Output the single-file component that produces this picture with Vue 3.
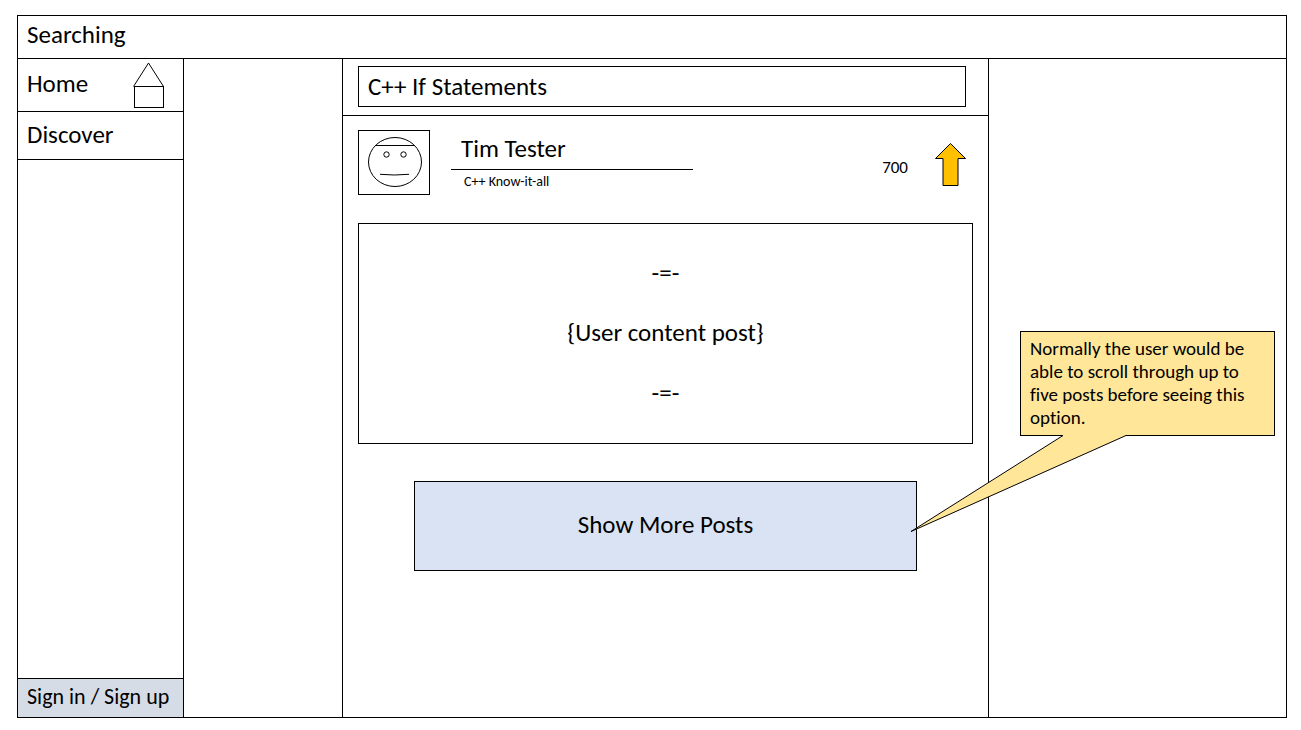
<script setup>
import { ref } from 'vue'

const query = ref('C++ If Statements')
const votes = ref(700)
const postLines = ['-=-', '{User content post}', '-=-']
</script>

<template>
  <div class="page">
    <div class="frame">
      <header class="topbar">
        <h1 class="title">Searching</h1>
      </header>

      <div class="columns">
        <nav class="sidebar">
          <a class="nav-item nav-home" href="#home">
            <span>Home</span>
            <svg class="house" viewBox="0 0 32 47" aria-hidden="true">
              <path d="M0.500 24.500L15.500 1L30.500 24.500" />
              <path d="M1.500 24.500H30.500V45.500H1.500Z" shape-rendering="crispEdges" />
            </svg>
          </a>
          <a class="nav-item nav-discover" href="#discover">Discover</a>
          <a class="sign-in" href="#sign-in">Sign in / Sign up</a>
        </nav>

        <main class="feed">
          <form class="search" @submit.prevent>
            <input v-model="query" class="search-input" type="text" aria-label="Search" />
          </form>

          <article class="post">
            <div class="author">
              <svg class="avatar" viewBox="0 0 72 65" role="img" aria-label="Avatar">
                <rect x="0.5" y="0.5" width="71" height="64" />
                <ellipse cx="37" cy="32" rx="26.5" ry="24.500" />
                <path d="M18 15.500H56" />
                <circle cx="28.500" cy="24.500" r="2.700" />
                <circle cx="45.500" cy="24.500" r="2.700" />
                <path d="M22 44.300Q36 45.700 51 44.300" />
              </svg>
              <div class="identity">
                <h2 class="name">Tim Tester</h2>
                <p class="role">C++ Know-it-all</p>
              </div>
              <span class="votes">{{ votes }}</span>
              <button class="upvote" type="button" aria-label="Upvote" @click="votes++">
                <svg viewBox="0 0 32 45" aria-hidden="true">
                  <path d="M15.500 1.500L30.500 16.500H23V43.500H8V16.500H0.500Z" />
                </svg>
              </button>
            </div>

            <div class="content">
              <p v-for="(line, i) in postLines" :key="i">{{ line }}</p>
            </div>
          </article>

          <button class="more" type="button">Show More Posts</button>
        </main>

        <aside class="notes">
          <div class="callout">
            <svg class="tail" viewBox="0 0 230 102" aria-hidden="true">
              <path class="tail-fill" d="M158 0L158 1.500L6 97.500L221 1.500L221 0Z" />
              <path class="tail-line" d="M158 1.500L6 97.500L221 1.500" />
            </svg>
            <p>Normally the user would be able to scroll through up to five posts before seeing this option.</p>
          </div>
        </aside>
      </div>
    </div>
  </div>
</template>

<style>
body {
  margin: 0;
  background: #fff;
}
</style>

<style scoped>
.page {
  box-sizing: border-box;
  display: flex;
  min-height: 100vh;
  padding: 15px 14px 12px 17px;
  color: #000;
  font-family: Calibri, Carlito, Lato, sans-serif;
  font-size: 25px;
  font-variant-ligatures: none;
  line-height: 30px;
}

.page * {
  box-sizing: border-box;
}

h1,
h2,
p {
  margin: 0;
  font-size: inherit;
  font-weight: 400;
}

a {
  color: inherit;
  text-decoration: none;
}

button,
input {
  margin: 0;
  border-radius: 0;
  color: inherit;
  font: inherit;
}

svg {
  display: block;
  fill: none;
  stroke: #000;
  stroke-width: 1;
}

.frame {
  display: flex;
  flex: 1;
  flex-direction: column;
  border: 1px solid #000;
}

.topbar {
  padding: 4px 9px 8px;
  border-bottom: 1px solid #000;
}

.columns {
  display: grid;
  flex: 1;
  grid-template-columns: 166px minmax(0, 158fr) minmax(0, 647fr) minmax(0, 297fr);
}

.sidebar {
  display: flex;
  flex-direction: column;
  grid-column: 1;
  border-right: 1px solid #000;
}

.nav-item {
  display: flex;
  align-items: center;
  border-bottom: 1px solid #000;
}

.nav-home {
  align-items: flex-start;
  justify-content: space-between;
  padding: 3px 18px 2px 9px;
}

.nav-home span {
  padding-top: 7px;
}

.nav-discover {
  padding: 8px 9px 9px;
}

.house {
  width: 32px;
  height: 47px;
}

.sign-in {
  margin-top: auto;
  padding: 3px 9px 5px;
  border-top: 1px solid #000;
  background: #d6dce5;
  font-size: 22px;
  white-space: nowrap;
}

.feed {
  grid-column: 3;
  border: solid #000;
  border-width: 0 1px;
}

.search {
  padding: 7px 22px 8px 15px;
  border-bottom: 1px solid #000;
}

.search-input {
  display: block;
  width: 100%;
  height: 41px;
  padding: 0 9px 1px;
  border: 1px solid #000;
  background: #fff;
}

.post {
  padding: 14px 15px 0;
}

.author {
  display: flex;
}

.avatar {
  flex: none;
  width: 72px;
  height: 65px;
}

.identity {
  width: 242px;
  margin-left: 21px;
}

.name {
  padding: 4px 10px 5px;
  border-bottom: 1px solid #000;
}

.role {
  padding: 3px 13px 4px;
  font-size: 14px;
  line-height: 18px;
}

.votes {
  margin-left: auto;
  padding-top: 23px;
  font-size: 17px;
}

.upvote {
  align-self: flex-start;
  margin: 12px 6px 0 27px;
  padding: 0;
  border: 0;
  background: none;
}

.upvote svg {
  width: 32px;
  height: 45px;
  fill: #ffc000;
}

.content {
  display: flex;
  flex-direction: column;
  gap: 30px;
  margin-top: 28px;
  padding: 34px 16px 35px;
  border: 1px solid #000;
  text-align: center;
}

.more {
  display: block;
  width: calc(100% - 142px);
  height: 90px;
  margin: 37px auto 0;
  padding: 0 0 2px;
  border: 1px solid #000;
  background: #dae3f3;
}

.notes {
  grid-column: 4;
  padding: 272px 11px 0 31px;
}

.callout {
  position: relative;
  padding: 5px 9px 6px;
  border: 1px solid #000;
  background: #ffe699;
  font-size: 19px;
  line-height: 23px;
}

.tail {
  position: absolute;
  top: 102px;
  left: -116px;
  width: 230px;
  height: 102px;
  pointer-events: none;
}

.tail-fill {
  fill: #ffe699;
  stroke: none;
}
</style>
